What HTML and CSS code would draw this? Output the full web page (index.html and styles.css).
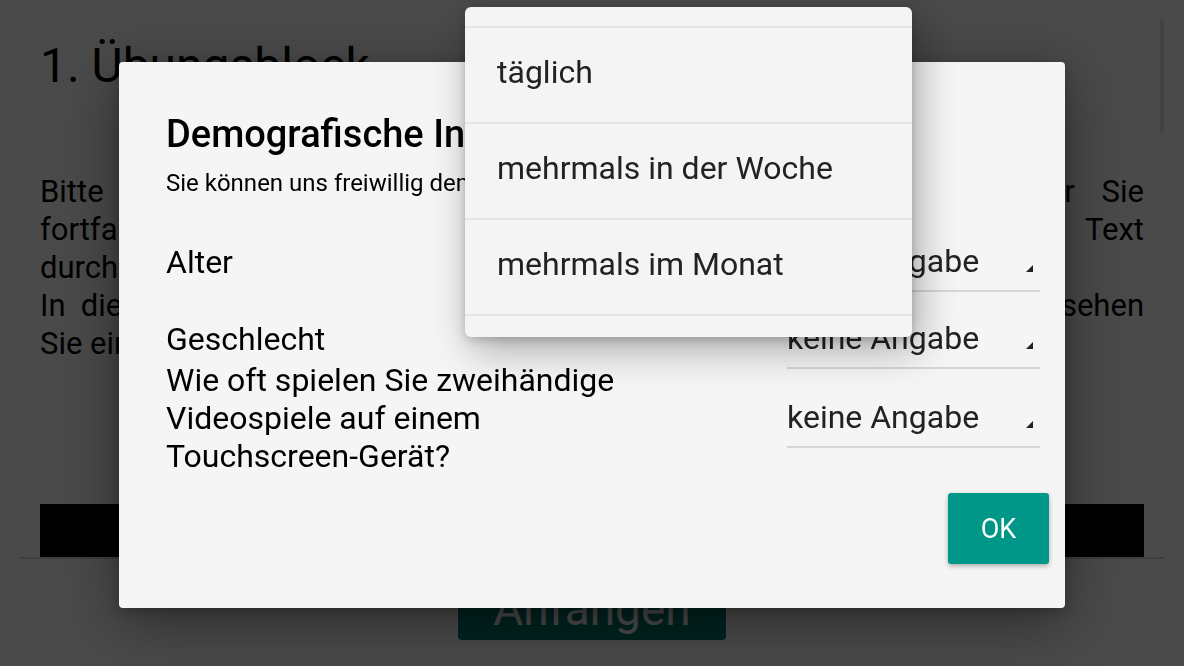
FILE: index.html
```html
<!DOCTYPE html>
<html lang="de">
<head>
<meta charset="utf-8">
<title>Übungsblock</title>
<link rel="stylesheet" href="styles.css">
</head>
<body>
<div class="page">
  <div class="content">
    <h1 class="block-title">1. Übungsblock</h1>
    <div class="intro">
      <p>
        <span class="line-full">Bitte lesen Sie die folgenden Hinweise aufmerksam durch, bevor Sie</span>
        <span class="line-full">fortfahren. Tippen Sie auf die Markierungen, um den jeweiligen Text</span>
        <span class="line">durchzulesen.</span>
      </p>
      <p>
        <span class="line-full">In diesem Übungsblock bekommen Sie nacheinander einige Bilder zu sehen</span>
        <span class="line">Sie eine Aufgabe zu den Bildern.</span>
      </p>
    </div>
    <div class="black-bar"></div>
  </div>
  <div class="divider"></div>
  <div class="page-actions">
    <button class="start-btn">Anfangen</button>
  </div>
  <div class="scrollbar"></div>
</div>

<div class="scrim"></div>

<div class="dialog">
  <h2 class="dialog-title">Demografische Informationen</h2>
  <p class="dialog-sub">Sie können uns freiwillig demografische Informationen mitteilen.</p>
  <div class="form">
    <div class="row">
      <div class="label">Alter</div>
      <div class="select"><span>keine Angabe</span><span class="arrow"></span></div>
    </div>
    <div class="row row-gender">
      <div class="label">Geschlecht</div>
      <div class="select"><span>keine Angabe</span><span class="arrow"></span></div>
    </div>
    <div class="row row-freq">
      <div class="label">Wie oft spielen Sie zweihändige Videospiele auf einem Touchscreen-Gerät?</div>
      <div class="select select-mid"><span>keine Angabe</span><span class="arrow"></span></div>
    </div>
  </div>
  <div class="dialog-actions">
    <button class="ok-btn">OK</button>
  </div>
</div>

<div class="dropdown">
  <ul class="options">
    <li>keine Angabe</li>
    <li>täglich</li>
    <li>mehrmals in der Woche</li>
    <li>mehrmals im Monat</li>
    <li>seltener</li>
    <li>nie</li>
  </ul>
</div>
</body>
</html>
```

FILE: styles.css
```css
html, body {
  margin: 0;
  padding: 0;
  width: 1184px;
  height: 666px;
  overflow: hidden;
  background: #ffffff;
  font-family: Roboto, "Noto Sans", "Liberation Sans", sans-serif;
}

.page {
  position: relative;
  height: 666px;
  padding: 0 20px;
  box-sizing: border-box;
}

.content {
  padding: 36px 20px 0;
}

.block-title {
  margin: 0;
  font-size: 48px;
  line-height: 60px;
  font-weight: 400;
  color: #000;
}

.intro {
  margin-top: 77px;
  font-size: 31px;
  line-height: 38px;
  color: #000;
}

.intro p {
  margin: 0;
}

.line,
.line-full {
  display: block;
  white-space: nowrap;
}

.line-full {
  text-align: justify;
  text-align-last: justify;
}

.black-bar {
  margin-top: 141px;
  height: 53px;
  background: #000;
}

.divider {
  height: 2px;
  background: #d8d8d8;
}

.page-actions {
  display: flex;
  justify-content: center;
  margin-top: 19px;
}

.start-btn {
  width: 268px;
  height: 62px;
  border: none;
  border-radius: 4px;
  background: #00796b;
  color: #fff;
  font-family: inherit;
  font-size: 46px;
  line-height: 62px;
  padding: 0;
}

.scrollbar {
  position: absolute;
  top: 19px;
  right: 20px;
  width: 4px;
  height: 114px;
  background: rgba(0, 0, 0, 0.12);
}

.scrim {
  position: fixed;
  inset: 0;
  background: rgba(0, 0, 0, 0.71);
}

.dialog {
  position: absolute;
  left: 119px;
  top: 62px;
  width: 946px;
  box-sizing: border-box;
  padding: 50px 25px 44px 47px;
  background: #f5f5f5;
  border-radius: 4px;
  box-shadow: 0 14px 60px rgba(0, 0, 0, 0.4), 0 4px 14px rgba(0, 0, 0, 0.22);
}

.dialog-title {
  margin: 0;
  font-size: 38px;
  line-height: 44px;
  font-weight: 500;
  color: #000;
}

.dialog-sub {
  margin: 12px 0 0;
  font-size: 24px;
  line-height: 30px;
  color: #000;
}

.form {
  display: flex;
  flex-direction: column;
  margin-top: 45px;
}

.row {
  display: flex;
  justify-content: space-between;
  align-items: flex-start;
}

.row-gender {
  margin-top: 39px;
}

.row-freq {
  margin-top: 3px;
}

.label {
  width: 480px;
  font-size: 32px;
  line-height: 38px;
  color: #000;
}

.select {
  width: 253px;
  display: flex;
  justify-content: space-between;
  align-items: flex-end;
  font-size: 32px;
  line-height: 38px;
  color: #222;
  padding-bottom: 10px;
  border-bottom: 2px solid #d6d6d6;
  margin-top: -1px;
  margin-bottom: -11px;
}

.select-mid {
  margin-top: 37px;
}

.arrow {
  width: 7px;
  height: 7px;
  margin: 0 7px 8px 0;
  background: #222;
  clip-path: polygon(100% 0, 100% 100%, 0 100%);
}

.dialog-actions {
  display: flex;
  justify-content: flex-end;
  margin-top: 18px;
  margin-right: -9px;
}

.ok-btn {
  width: 101px;
  height: 71px;
  padding: 0;
  border: none;
  border-radius: 3px;
  background: #009688;
  color: #fff;
  font-family: inherit;
  font-size: 27px;
  box-shadow: 0 2px 5px rgba(0, 0, 0, 0.3);
}

.dropdown {
  position: absolute;
  left: 465px;
  top: 7px;
  width: 447px;
  height: 330px;
  overflow: hidden;
  background: #f4f4f4;
  border-radius: 6px;
  box-shadow: 6px 12px 40px rgba(0, 0, 0, 0.32), 0 3px 10px rgba(0, 0, 0, 0.18);
}

.options {
  list-style: none;
  margin: -75px 0 0;
  padding: 0;
}

.options li {
  height: 96px;
  box-sizing: border-box;
  padding: 0 0 6px 32px;
  display: flex;
  align-items: center;
  border-bottom: 2px solid #e3e3e3;
  font-size: 32px;
  color: #222;
}
```
